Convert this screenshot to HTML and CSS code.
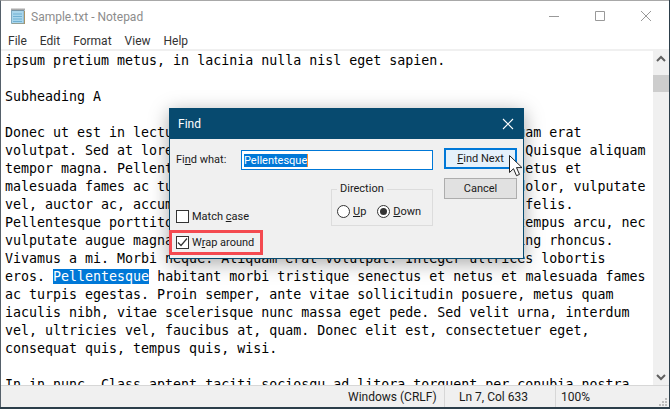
FILE: index.html
```html
<!DOCTYPE html>
<html lang="en">
<head>
<meta charset="utf-8">
<title>Sample.txt - Notepad</title>
<link rel="stylesheet" href="styles.css">
</head>
<body>
<div class="window">
  <header class="titlebar">
    <svg class="app-icon" width="16" height="17" viewBox="0 0 16 17"><path d="M1.500 3.500h12.500v13H1.500z" fill="#a9d6ec" stroke="#7fa9c0"/><path d="M14.500 4v13H2" fill="none" stroke="#a89468"/><path d="M3 7h9M3 9.500h9M3 12h9M3 14.500h9" stroke="#6fb0d2"/><path d="M2 1.500v2M4 1.500v2M6 1.500v2M8 1.500v2M10 1.500v2M12 1.500v2M14 1.500v2" stroke="#555"/></svg>
    <span class="title">Sample.txt - Notepad</span>
    <div class="caption">
      <svg class="cap" width="46" height="16" viewBox="0 0 46 16"><path d="M18 8.500h10" stroke="#999"/></svg>
      <svg class="cap" width="46" height="16" viewBox="0 0 46 16"><path d="M18.500 3.500h9v9h-9z" fill="none" stroke="#999"/></svg>
      <svg class="cap" width="46" height="16" viewBox="0 0 46 16"><path d="M18 3l10 10M28 3L18 13" stroke="#999"/></svg>
    </div>
  </header>
  <nav class="menubar">
    <span>File</span><span>Edit</span><span>Format</span><span>View</span><span>Help</span>
  </nav>
  <main class="editor">
    <pre class="text">ipsum pretium metus, in lacinia nulla nisl eget sapien.

Subheading A

Donec ut est in lectus consequat consequat. Etiam eget dui. Aliquam erat
volutpat. Sed at lorem in nunc porta tristique. Proin nec augue. Quisque aliquam
tempor magna. Pellentesque habitant morbi tristique senectus et netus et
malesuada fames ac turpis egestas. Nunc ac magna. Maecenas odio dolor, vulputate
vel, auctor ac, accumsan id, felis. Pellentesque cursus sagittis felis.
Pellentesque porttitor, velit lacinia egestas auctor, diam eros tempus arcu, nec
vulputate augue magna vel risus. Cras non magna vel ante adipiscing rhoncus.
Vivamus a mi. Morbi neque. Aliquam erat volutpat. Integer ultrices lobortis
eros. <mark class="sel">Pellentesque</mark> habitant morbi tristique senectus et netus et malesuada fames
ac turpis egestas. Proin semper, ante vitae sollicitudin posuere, metus quam
iaculis nibh, vitae scelerisque nunc massa eget pede. Sed velit urna, interdum
vel, ultricies vel, faucibus at, quam. Donec elit est, consectetuer eget,
consequat quis, tempus quis, wisi.

In in nunc. Class aptent taciti sociosqu ad litora torquent per conubia nostra</pre>
    <div class="scrollbar">
      <svg width="16" height="17" viewBox="0 0 16 17"><path d="M4 10l4-4 4 4" fill="none" stroke="#606060" stroke-width="2"/></svg>
      <div class="track"><div class="thumb"></div></div>
      <svg width="16" height="17" viewBox="0 0 16 17"><path d="M4 7l4 4 4-4" fill="none" stroke="#606060" stroke-width="2"/></svg>
    </div>
  </main>
  <footer class="statusbar">
    <span class="cell eol">Windows (CRLF)</span>
    <span class="cell pos">Ln 7, Col 633</span>
    <span class="cell zoom">100%</span>
    <svg class="grip" width="12" height="12" viewBox="0 0 12 12"><path d="M9 3h2v2H9zM6 6h2v2H6zM9 6h2v2H9zM3 9h2v2H3zM6 9h2v2H6zM9 9h2v2H9z" fill="#bdbdbd"/></svg>
  </footer>
</div>

<section class="dialog">
  <header class="dlg-title">
    <span>Find</span>
    <svg width="12" height="12" viewBox="0 0 12 12"><path d="M1 1l10 10M11 1L1 11" stroke="#fff" stroke-width="1.100"/></svg>
  </header>
  <div class="dlg-body">
    <div class="dlg-left">
      <div class="find-row">
        <label class="find-label">Fi<u>n</u>d what:</label>
        <div class="find-input"><span class="input-sel">Pellentesque</span></div>
      </div>
      <div class="options">
        <div class="checks">
          <label class="check"><span class="box"></span><span>Match <u>c</u>ase</span></label>
          <label class="check"><span class="box"><svg width="13" height="13" viewBox="0 0 13 13"><path d="M2 6.500l3 3 6-7" fill="none" stroke="#333" stroke-width="1.200"/></svg></span><span>W<u>r</u>ap around</span></label>
        </div>
        <fieldset class="direction">
          <legend>Direction</legend>
          <label class="radio"><span class="circle"></span><span><u>U</u>p</span></label>
          <label class="radio"><span class="circle on"></span><span><u>D</u>own</span></label>
        </fieldset>
      </div>
    </div>
    <div class="dlg-buttons">
      <button class="btn primary"><u>F</u>ind Next</button>
      <button class="btn">Cancel</button>
    </div>
  </div>
  <div class="callout"></div>
  <svg class="cursor" width="16" height="24" viewBox="0 0 16 24"><path d="M1.500 1.500v17l4-3.800 3 7 3-1.300-3-6.800h5.500z" fill="#fff" stroke="#222"/></svg>
</section>
</body>
</html>
```

FILE: styles.css
```css
* { box-sizing: border-box; }
html, body { margin: 0; height: 100%; }
body {
  width: 670px;
  height: 409px;
  overflow: hidden;
  background: #2c3e4a;
  font-family: Roboto, "Open Sans", sans-serif;
  font-size: 12px;
  color: #1a1a1a;
  position: relative;
}
.window {
  width: 669px;
  height: 407px;
  border-top: 1px solid #a8a8a8;
  border-left: 1px solid #55606a;
  display: flex;
  flex-direction: column;
  background: #fff;
}
.titlebar {
  height: 29px;
  flex: none;
  display: flex;
  align-items: center;
  padding-left: 9px;
  background: #fff;
}
.app-icon { flex: none; }
.title { margin-left: 5px; color: #8c8c8c; font-size: 12px; padding-top: 2px; }
.caption { margin-left: auto; display: flex; }
.cap { display: block; }
.menubar {
  height: 21px;
  flex: none;
  display: flex;
  gap: 13px;
  padding: 2px 0 0 7px;
  align-items: center;
  border-bottom: 2px solid #f0f0f0;
  color: #333;
}
.editor {
  flex: 1;
  min-height: 0;
  display: flex;
  overflow: hidden;
}
.text {
  flex: 1;
  margin: 0;
  padding: 1px 0 0 4px;
  font-family: "DejaVu Sans Mono", monospace;
  font-size: 13.300px;
  line-height: 18px;
  color: #000;
  overflow: hidden;
}
.sel { background: #0078d7; color: #fff; }
.scrollbar {
  width: 16px;
  flex: none;
  background: #f0f0f0;
  display: flex;
  flex-direction: column;
}
.scrollbar svg { flex: none; display: block; }
.track { flex: 1; padding-top: 7px; }
.thumb { height: 17px; background: #cdcdcd; }
.statusbar {
  height: 22px;
  flex: none;
  background: #f0f0f0;
  border-top: 1px solid #d7d7d7;
  display: flex;
  align-items: center;
  position: relative;
}
.cell { height: 100%; display: flex; align-items: center; }
.eol { margin-left: 347px; width: 97px; border-right: 1px solid #d7d7d7; }
.pos { padding-left: 14px; width: 111px; border-right: 1px solid #d7d7d7; }
.zoom { padding-left: 5px; }
.grip { position: absolute; right: 1px; bottom: 0; }

.dialog {
  position: absolute;
  left: 169px;
  top: 108px;
  width: 355px;
  height: 151px;
  background: #f0f0f0;
  border: 1px solid #074a6f;
  box-shadow: 0 4px 18px rgba(0,0,0,.35);
  display: flex;
  flex-direction: column;
  font-size: 11px;
}
.dlg-title {
  height: 30px;
  flex: none;
  background: #074a6f;
  color: #fff;
  display: flex;
  align-items: center;
  justify-content: space-between;
  padding: 0 9px 0 8px;
  font-size: 12px;
}
.dlg-body {
  flex: 1;
  display: flex;
  padding: 9px 6px 0 6px;
}
.dlg-left { width: 257px; flex: none; }
.find-row { display: flex; align-items: center; margin-top: 2px; }
.find-label { width: 65px; flex: none; padding-bottom: 2px; }
.find-input {
  flex: 1;
  height: 20px;
  border: 1px solid #0078d7;
  background: #fff;
  padding: 1px 2px;
  display: flex;
  align-items: center;
}
.input-sel {
  background: #0078d7;
  color: #fff;
  line-height: 13px;
  border-right: 1px solid #ff8a2a;
}
.options { display: flex; justify-content: space-between; margin-top: 17px; }
.checks { display: flex; flex-direction: column; gap: 12px; padding-top: 22px; }
.check { display: flex; align-items: center; gap: 3px; height: 14px; }
.box {
  width: 13px; height: 13px;
  background: #fff;
  border: 1px solid #333;
  display: block;
  position: relative;
}
.box svg { position: absolute; left: -1px; top: -1px; }
.direction {
  width: 102px;
  height: 43px;
  margin: -4px 0 0 0;
  padding: 3px 0 0 5px;
  border: 1px solid #dcdcdc;
  display: flex;
  gap: 11px;
}
.direction legend { padding: 0 3px; margin-left: 0; font-size: 11px; line-height: 12px; }
.radio { display: inline-flex; align-items: center; gap: 3px; }
.circle {
  width: 13px; height: 13px;
  border-radius: 50%;
  border: 1px solid #333;
  background: #fff;
  position: relative;
  display: block;
}
.circle.on::after {
  content: "";
  position: absolute;
  inset: 2px;
  border-radius: 50%;
  background: #333;
}
.dlg-buttons {
  margin-left: 11px;
  width: 74px;
  display: flex;
  flex-direction: column;
  gap: 9px;
}
.btn {
  height: 21px;
  width: 73px;
  padding: 0;
  font: inherit;
  color: #1a1a1a;
  background: #e1e1e1;
  border: 1px solid #adadad;
}
.btn.primary { background: #e5f1fb; border: 2px solid #0078d7; }
.callout {
  position: absolute;
  left: -1px;
  top: 121px;
  width: 94px;
  height: 25px;
  border: 3px solid #f44a50;
}
.cursor { position: absolute; left: 338px; top: 45px; }
```
